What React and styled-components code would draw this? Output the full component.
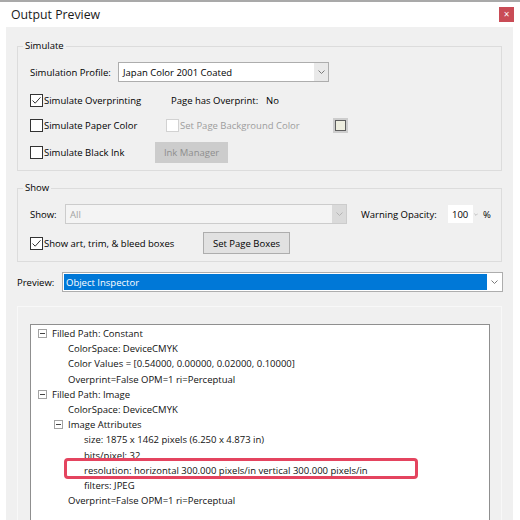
import React from "react";
import styled, { createGlobalStyle } from "styled-components";

const Global = createGlobalStyle`
  html, body { margin: 0; padding: 0; background: #ffffff; }
  body {
    font-family: "Open Sans", "Noto Sans", "Liberation Sans", sans-serif;
    font-size: 9.5px;
    color: #000000;
  }
`;

const Window = styled.div`
  width: 520px;
  height: 520px;
  overflow: hidden;
  box-sizing: border-box;
  border-top: 2px solid #a9a9a9;
  background: #ffffff;
  display: flex;
  flex-direction: column;
`;

const TitleBar = styled.div`
  height: 25px;
  flex: none;
  display: flex;
  align-items: center;
  justify-content: space-between;
  padding: 0 6px 0 11px;
`;

const Title = styled.div`
  font-size: 12.3px;
  color: #1a1a1a;
`;

const CloseButton = styled.div`
  width: 15px;
  height: 15px;
  background: #c94c56;
  color: #ffffff;
  font-size: 10px;
  line-height: 15px;
  text-align: center;
`;

const Body = styled.div`
  flex: 1;
  margin: 0 7px 0 6px;
  padding: 0 11px;
  background: #f0f0f0;
  display: flex;
  flex-direction: column;
`;

const Group = styled.fieldset`
  margin: ${(p) => p.$top}px 0 0;
  padding: 8px 12px 7px;
  border: 1px solid #dcdcdc;
  min-width: 0;
  flex: none;
`;

const Legend = styled.legend`
  padding: 0 2px;
  margin-left: -7px;
  line-height: 16px;
`;

const Row = styled.div`
  display: flex;
  align-items: center;
  height: ${(p) => p.$h || 20}px;
  margin-top: ${(p) => p.$mt || 0}px;
  white-space: nowrap;
`;

const Cell = styled.div`
  width: ${(p) => p.$w}px;
  margin-left: ${(p) => p.$ml || 0}px;
  flex: none;
  display: flex;
  align-items: center;
  color: ${(p) => (p.$muted ? "#9d9d9d" : "inherit")};
`;

const Box = styled.span`
  width: 13px;
  height: 13px;
  box-sizing: border-box;
  flex: none;
  margin-right: 1px;
  border: 1px solid ${(p) => (p.$disabled ? "#d2d2d2" : "#333333")};
  background: #ffffff;
  display: inline-flex;
  align-items: center;
  justify-content: center;
`;

const Check = ({ checked, disabled }) => (
  <Box $disabled={disabled}>
    {checked && (
      <svg width="11" height="11" viewBox="0 0 11 11">
        <polyline points="1.5,5.5 4.2,8.2 9.5,2.3" fill="none" stroke="#333" strokeWidth="1" />
      </svg>
    )}
  </Box>
);

const Button = styled.div`
  width: ${(p) => p.$w}px;
  height: ${(p) => p.$h}px;
  box-sizing: border-box;
  flex: none;
  display: flex;
  align-items: center;
  justify-content: center;
  background: ${(p) => (p.$disabled ? "#cccccc" : "#e1e1e1")};
  border: 1px solid ${(p) => (p.$disabled ? "#cccccc" : "#adadad")};
  color: ${(p) => (p.$disabled ? "#8e8e8e" : "#000000")};
`;

const Swatch = styled.div`
  width: 15px;
  height: 15px;
  box-sizing: border-box;
  background: #cdcdcd;
  padding: 2px;
  flex: none;
`;

const SwatchFill = styled.div`
  width: 100%;
  height: 100%;
  box-sizing: border-box;
  border: 1px solid #5e5e5e;
  background: #eeeedf;
`;

const comboSkins = {
  normal: { border: "#adadad", bg: "#ffffff", arrowBg: "#e9e9e9", text: "#000000", arrow: "#7a7a7a" },
  disabled: { border: "#cccccc", bg: "#f4f4f4", arrowBg: "#dadada", text: "#a3a3a3", arrow: "#b4b4b4" },
  focus: { border: "#adadad", bg: "#ffffff", arrowBg: "#ffffff", text: "#ffffff", arrow: "#7a7a7a" },
};

const Combo = styled.div`
  width: ${(p) => p.$w}px;
  height: 20px;
  box-sizing: border-box;
  flex: none;
  display: flex;
  border: 1px solid ${(p) => comboSkins[p.$skin].border};
  background: ${(p) => comboSkins[p.$skin].bg};
  color: ${(p) => comboSkins[p.$skin].text};
  padding: ${(p) => (p.$skin === "focus" ? "1px 0 1px 1px" : "0")};
`;

const ComboText = styled.div`
  flex: 1;
  display: flex;
  align-items: center;
  padding-left: ${(p) => (p.$skin === "focus" ? 2 : 4)}px;
  background: ${(p) => (p.$skin === "focus" ? "#0078d7" : "transparent")};
`;

const ComboArrow = styled.div`
  width: ${(p) => (p.$skin === "focus" ? 15 : 14)}px;
  flex: none;
  display: flex;
  align-items: center;
  justify-content: center;
  background: ${(p) => comboSkins[p.$skin].arrowBg};
`;

const Chevron = ({ color, w = 7, h = 4 }) => (
  <svg width={w} height={h} viewBox="0 0 7 4">
    <polyline points="0.5,0.5 3.5,3.5 6.5,0.5" fill="none" stroke={color} strokeWidth="1" />
  </svg>
);

const Select = ({ w, skin = "normal", children }) => (
  <Combo $w={w} $skin={skin}>
    <ComboText $skin={skin}>{children}</ComboText>
    <ComboArrow $skin={skin}>
      <Chevron color={comboSkins[skin].arrow} />
    </ComboArrow>
  </Combo>
);

const Spin = styled.div`
  width: 25px;
  height: 18px;
  flex: none;
  background: #ffffff;
  display: flex;
  align-items: center;
  padding-left: 4px;
  box-sizing: border-box;
`;

const SpinMark = styled.div`
  width: 10px;
  flex: none;
  display: flex;
  align-items: center;
  padding-left: 1px;
  box-sizing: border-box;
`;

const PreviewRow = styled.div`
  display: flex;
  align-items: center;
  height: 20px;
  margin-top: 10px;
  flex: none;
`;

const Panel = styled.div`
  flex: 1;
  margin-top: 14px;
  border: 1px solid #f8f8f8;
  border-bottom: none;
  padding: 17px 11px 0 12px;
  display: flex;
  min-height: 0;
`;

const Tree = styled.div`
  flex: 1;
  background: #ffffff;
  border: 1px solid #8f8f8f;
  border-bottom: none;
  padding-top: 1px;
`;

const Node = styled.div`
  position: relative;
  height: 15.2px;
  display: flex;
  align-items: center;
  padding-left: ${(p) => 7 + p.$level * 16}px;
  white-space: nowrap;
  color: #111111;

  ${(p) =>
    p.$marked &&
    `
    &::after {
      content: "";
      position: absolute;
      left: 33px;
      top: -5px;
      width: 354px;
      height: 21px;
      box-sizing: border-box;
      border: 3px solid #e4445f;
      border-radius: 4px;
    }
  `}
`;

const Expander = styled.span`
  width: 9px;
  height: 9px;
  box-sizing: border-box;
  border: 1px solid #a3a3a3;
  margin-right: 5px;
  flex: none;
  display: inline-flex;
  align-items: center;
  justify-content: center;

  &::before {
    content: "";
    width: 5px;
    height: 1px;
    background: #444444;
  }
`;

const Indent = styled.span`
  width: 14px;
  flex: none;
`;

const nodes = [
  { level: 0, open: true, text: "Filled Path: Constant" },
  { level: 1, text: "ColorSpace: DeviceCMYK" },
  { level: 1, text: "Color Values = [0.54000, 0.00000, 0.02000, 0.10000]" },
  { level: 1, text: "Overprint=False OPM=1 ri=Perceptual" },
  { level: 0, open: true, text: "Filled Path: Image" },
  { level: 1, text: "ColorSpace: DeviceCMYK" },
  { level: 1, open: true, text: "Image Attributes" },
  { level: 2, text: "size: 1875 x 1462 pixels (6.250 x 4.873 in)" },
  { level: 2, text: "bits/pixel: 32" },
  { level: 2, marked: true, text: "resolution: horizontal 300.000 pixels/in vertical 300.000 pixels/in" },
  { level: 2, text: "filters: JPEG" },
  { level: 1, text: "Overprint=False OPM=1 ri=Perceptual" },
];

export default function App() {
  return (
    <>
      <Global />
      <Window>
        <TitleBar>
          <Title>Output Preview</Title>
          <CloseButton>×</CloseButton>
        </TitleBar>
        <Body>
          <Group $top={11}>
            <Legend>Simulate</Legend>
            <Row>
              <Cell $w={88}>Simulation Profile:</Cell>
              <Select w={211}>Japan Color 2001 Coated</Select>
            </Row>
            <Row $mt={8}>
              <Cell $w={141}>
                <Check checked />
                Simulate Overprinting
              </Cell>
              <Cell $w={95}>Page has Overprint:</Cell>
              <Cell $w={30}>No</Cell>
            </Row>
            <Row $mt={5}>
              <Cell $w={136}>
                <Check />
                Simulate Paper Color
              </Cell>
              <Cell $w={167} $muted>
                <Check disabled />
                Set Page Background Color
              </Cell>
              <Swatch>
                <SwatchFill />
              </Swatch>
            </Row>
            <Row $mt={7} $h={21}>
              <Cell $w={125}>
                <Check />
                Simulate Black Ink
              </Cell>
              <Button $w={73} $h={21} $disabled>
                Ink Manager
              </Button>
            </Row>
          </Group>

          <Group $top={9}>
            <Legend>Show</Legend>
            <Row>
              <Cell $w={35}>Show:</Cell>
              <Select w={282} skin="disabled">
                All
              </Select>
              <Cell $w={87} $ml={14}>
                Warning Opacity:
              </Cell>
              <Spin>100</Spin>
              <SpinMark>
                <Chevron color="#9a9a9a" w={4} h={3} />
              </SpinMark>
              <Cell $w={12}>%</Cell>
            </Row>
            <Row $mt={8} $h={22}>
              <Cell $w={173}>
                <Check checked />
                Show art, trim, &amp; bleed boxes
              </Cell>
              <Button $w={87} $h={22}>
                Set Page Boxes
              </Button>
            </Row>
          </Group>

          <PreviewRow>
            <Cell $w={45}>Preview:</Cell>
            <Select w={441} skin="focus">
              Object Inspector
            </Select>
          </PreviewRow>

          <Panel>
            <Tree>
              {nodes.map((n, i) => (
                <Node key={i} $level={n.level} $marked={n.marked}>
                  {n.open ? <Expander /> : <Indent />}
                  {n.text}
                </Node>
              ))}
            </Tree>
          </Panel>
        </Body>
      </Window>
    </>
  );
}
